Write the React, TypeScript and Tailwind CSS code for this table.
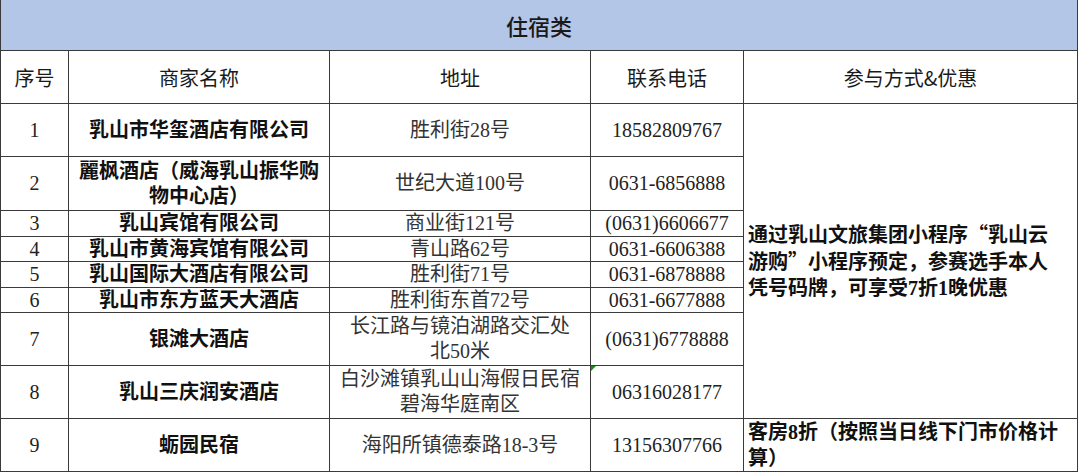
import React from "react";

interface HotelRow {
  no: string;
  name: string;
  addr: string;
  tel: string;
  mark?: boolean;
}

const rows: HotelRow[] = [
  { no: "1", name: "乳山市华玺酒店有限公司", addr: "胜利街28号", tel: "18582809767" },
  {
    no: "2",
    name: "麗枫酒店（威海乳山振华购\n物中心店）",
    addr: "世纪大道100号",
    tel: "0631-6856888",
  },
  { no: "3", name: "乳山宾馆有限公司", addr: "商业街121号", tel: "(0631)6606677" },
  { no: "4", name: "乳山市黄海宾馆有限公司", addr: "青山路62号", tel: "0631-6606388" },
  { no: "5", name: "乳山国际大酒店有限公司", addr: "胜利街71号", tel: "0631-6878888" },
  { no: "6", name: "乳山市东方蓝天大酒店", addr: "胜利街东首72号", tel: "0631-6677888" },
  {
    no: "7",
    name: "银滩大酒店",
    addr: "长江路与镜泊湖路交汇处\n北50米",
    tel: "(0631)6778888",
  },
  {
    no: "8",
    name: "乳山三庆润安酒店",
    addr: "白沙滩镇乳山山海假日民宿\n碧海华庭南区",
    tel: "06316028177",
    mark: true,
  },
  { no: "9", name: "蛎园民宿", addr: "海阳所镇德泰路18-3号", tel: "13156307766" },
];

const headers = ["序号", "商家名称", "地址", "联系电话", "参与方式&优惠"];

const cell =
  "bg-white flex items-center justify-center text-center overflow-hidden whitespace-pre-line";
const serif = "font-['Liberation_Serif','Noto_Sans_CJK_SC',serif]";
const cjk = "font-['Noto_Sans_CJK_SC',sans-serif]";

const App = () => {
  return (
    <div className="w-[1080px] h-[472px] bg-white overflow-hidden">
      <div
        className={`w-[1078px] grid grid-cols-[67px_260px_260px_152px_333px] grid-rows-[50px_52px_52px_53px_25px_24px_25px_24px_52px_52px_52px] gap-px bg-[#3a3a3a] px-px pb-px text-[20px] leading-[25px] ${serif}`}
      >
        {/* Title */}
        <div
          className={`col-span-5 bg-[#b4c6e7] flex items-center justify-center text-[22px] font-medium text-[#1a1a1a] ${cjk}`}
        >
          住宿类
        </div>

        {/* Header */}
        {headers.map((h) => (
          <div key={h} className={`${cell} ${cjk} text-[#1a1a1a]`}>
            {h}
          </div>
        ))}

        {/* Rows */}
        {rows.map((r, i) => (
          <React.Fragment key={r.no}>
            <div className={`${cell} text-[#222]`}>{r.no}</div>
            <div className={`${cell} font-bold text-[#111]`}>{r.name}</div>
            <div className={`${cell} text-[#333]`}>{r.addr}</div>
            <div className={`${cell} relative text-[#222]`}>
              {r.mark && (
                <span className="absolute left-0 top-0 w-0 h-0 border-t-[5px] border-t-[#1a8a1a] border-r-[5px] border-r-transparent" />
              )}
              {r.tel}
            </div>
            {i === 0 && (
              <div className="row-span-8 bg-white flex items-center pl-[4px] font-bold text-[#111] text-left leading-[26px]">
                <p>
                  通过乳山文旅集团小程序<span className={cjk}>“</span>乳山云
                  <br />
                  游购<span className={cjk}>”</span>小程序预定，参赛选手本人
                  <br />
                  凭号码牌，可享受7折1晚优惠
                </p>
              </div>
            )}
            {i === rows.length - 1 && (
              <div className="bg-white flex items-center pl-[4px] font-bold text-[#111] text-left leading-[26px]">
                <p>
                  客房8折（按照当日线下门市价格计
                  <br />
                  算）
                </p>
              </div>
            )}
          </React.Fragment>
        ))}
      </div>
    </div>
  );
};

export default App;
